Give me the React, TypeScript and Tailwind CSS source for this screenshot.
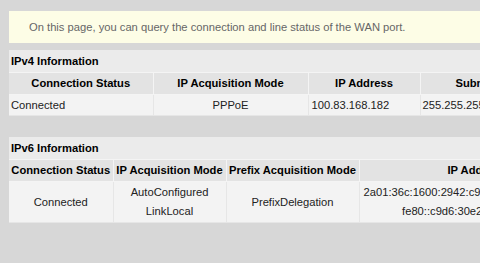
import React from "react";

const font = { fontFamily: '"Liberation Sans", Arial, sans-serif' };

export default function App() {
  return (
    <div
      className="w-[480px] h-[263px] overflow-hidden bg-[#d7d7d7] pt-[11px] pl-[9px] text-[11.2px]"
      style={font}
    >
      <div className="w-[600px] h-[32px] bg-[#fdfde6] flex items-center pl-[20px] text-[#666666]">
        On this page, you can query the connection and line status of the WAN port.
      </div>

      <div className="mt-[7px] w-[700px]">
        <div className="h-[22px] bg-[#ebebeb] flex items-center pl-[2px] font-bold text-black">
          IPv4 Information
        </div>
        <table className="table-fixed border-collapse w-[700px]">
          <colgroup>
            <col className="w-[144px]" />
            <col className="w-[155px]" />
            <col className="w-[112px]" />
            <col className="w-[140px]" />
            <col className="w-[149px]" />
          </colgroup>
          <thead>
            <tr className="h-[22px] bg-[#e3e3e3]">
              <th className="border border-[#f4f4f4] border-l-0 font-bold text-black text-center">Connection Status</th>
              <th className="border border-[#f4f4f4] font-bold text-black text-center">IP Acquisition Mode</th>
              <th className="border border-[#f4f4f4] font-bold text-black text-center">IP Address</th>
              <th className="border border-[#f4f4f4] font-bold text-black text-center">Subnet Mask</th>
              <th className="border border-[#f4f4f4] font-bold text-black text-center">Default Gateway</th>
            </tr>
          </thead>
          <tbody>
            <tr className="h-[21px] bg-[#f3f3f3] text-[#222222]">
              <td className="border border-[#e6e6e6] border-l-0 pl-[2px] text-left">Connected</td>
              <td className="border border-[#e6e6e6] text-center">PPPoE</td>
              <td className="border border-[#e6e6e6] pl-[3px] text-left">100.83.168.182</td>
              <td className="border border-[#e6e6e6] pl-[2px] text-left">255.255.255.255</td>
              <td className="border border-[#e6e6e6] pl-[2px] text-left">100.83.160.1</td>
            </tr>
          </tbody>
        </table>
      </div>

      <div className="mt-[21px] w-[800px]">
        <div className="h-[22px] bg-[#ebebeb] flex items-center pl-[2px] font-bold text-black">
          IPv6 Information
        </div>
        <table className="border-collapse">
          <thead>
            <tr className="h-[22px] bg-[#e3e3e3]">
              <th className="w-[104px] min-w-[104px] border border-[#f4f4f4] border-l-0 font-bold text-black text-center whitespace-nowrap px-0">Connection Status</th>
              <th className="w-[113px] min-w-[113px] border border-[#f4f4f4] font-bold text-black text-center whitespace-nowrap px-0">IP Acquisition Mode</th>
              <th className="w-[133px] min-w-[133px] border border-[#f4f4f4] font-bold text-black text-center whitespace-nowrap px-0">Prefix Acquisition Mode</th>
              <th className="border border-[#f4f4f4] font-bold text-black text-center whitespace-nowrap px-[4px]">IP Address</th>
              <th className="w-[150px] min-w-[150px] border border-[#f4f4f4] font-bold text-black text-center whitespace-nowrap">Prefix</th>
            </tr>
          </thead>
          <tbody>
            <tr className="h-[41px] bg-[#f3f3f3] text-[#222222] leading-[19px]">
              <td className="border border-[#e6e6e6] border-l-0 text-center">Connected</td>
              <td className="border border-[#e6e6e6] text-center">
                <div>AutoConfigured</div>
                <div>LinkLocal</div>
              </td>
              <td className="border border-[#e6e6e6] text-center">PrefixDelegation</td>
              <td className="border border-[#e6e6e6] text-center whitespace-nowrap px-[4px]">
                <div>2a01:36c:1600:2942:c9d6:30e2:8b4a:71f3/64</div>
                <div>fe80::c9d6:30e2:8b4a:71f3/64</div>
              </td>
              <td className="border border-[#e6e6e6] text-center">2a01:36c:1600:2942::/64</td>
            </tr>
          </tbody>
        </table>
      </div>
    </div>
  );
}
